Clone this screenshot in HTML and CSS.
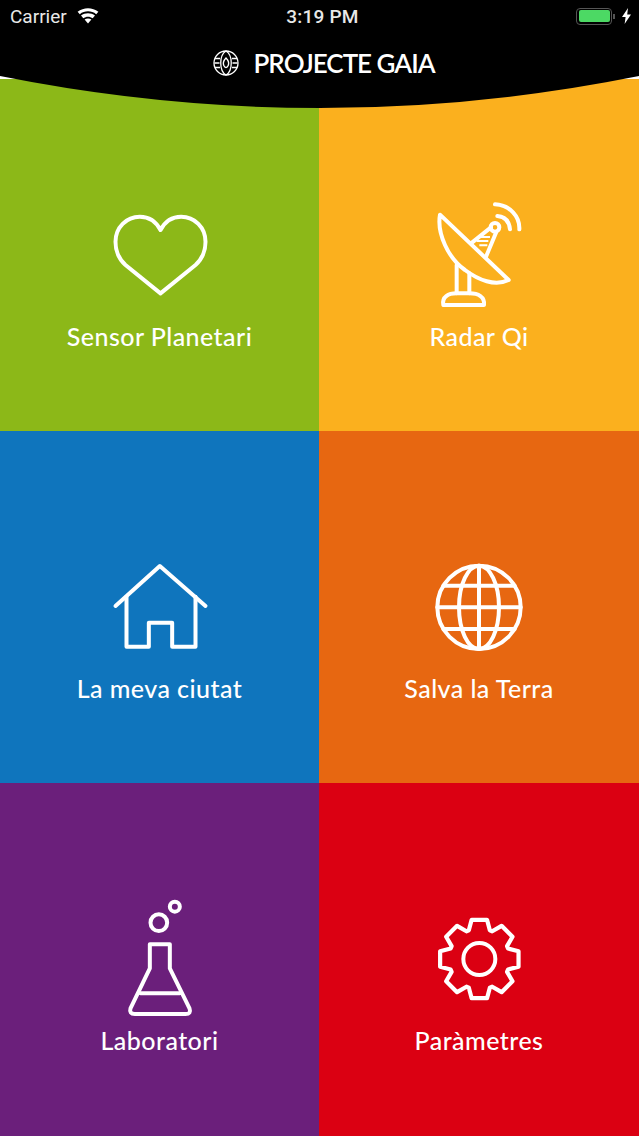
FILE: index.html
```html
<!DOCTYPE html>
<html lang="ca">
<head>
    <meta charset="UTF-8">
    <meta name="viewport" content="width=device-width, initial-scale=1.0">
    <title>Projecte Gaia</title>
    <link rel="stylesheet" href="styles.css">
</head>
<body>
    <header class="cap">
        <svg class="cap-fons" viewBox="0 0 639 110" width="639" height="110">
            <path d="M0 0H639V76Q320 140 0 76Z"/>
        </svg>
        <div class="estat">
            <div class="estat-esq">
                <span>Carrier</span>
                <svg class="wifi" viewBox="0 0 22 16" width="22" height="16">
                    <path d="M11 15.5L7.6 11.6C9.6 10 12.4 10 14.4 11.6Z"/>
                    <path d="M6.3 10.2L4 7.6C8 4.4 14 4.4 18 7.6L15.7 10.2C13 8.1 9 8.1 6.3 10.2Z"/>
                    <path d="M2.8 6.2L.6 3.8C6.6-1 15.4-1 21.4 3.8L19.2 6.2C14.4 2.4 7.6 2.4 2.8 6.2Z"/>
                </svg>
            </div>
            <span class="hora">3:19 PM</span>
            <div class="estat-dre">
                <div class="bateria"><div class="bateria-nivell"></div></div>
                <div class="bateria-punta"></div>
                <svg class="llamp" viewBox="0 0 9 16" width="9" height="16">
                    <path d="M6 0L0 9H3.6L2.6 16L9 6.4H5.2Z"/>
                </svg>
            </div>
        </div>
        <div class="titol">
            <svg class="logo" viewBox="0 0 26 26" width="26" height="26">
                <circle cx="13" cy="13" r="12"/>
                <path d="M13 1C6 5 6 21 13 25C20 21 20 5 13 1Z"/>
                <path d="M2 8.5H7M19 8.5H24M1.5 13H6.5M19.5 13H24.5M2 17.5H7M19 17.5H24"/>
                <path d="M13 8C10.5 10.5 10 13.5 10.8 15.5C11.4 17 12.3 17.5 13 17.5C13.7 17.5 14.6 17 15.2 15.5C16 13.5 15.5 10.5 13 8Z"/>
            </svg>
            <h1>PROJECTE GAIA</h1>
        </div>
    </header>

    <main class="graella">
        <a class="opcio verd">
            <svg class="icona" viewBox="58.5 15 300 360">
                <path d="M210 310L105 225C85 207 75 185 75 155C75 112 108 80 148 80C175 80 197 95 210 120C223 95 245 80 272 80C312 80 345 112 345 155C345 185 335 207 315 225Z"/>
            </svg>
            <span>Sensor Planetari</span>
        </a>
        <a class="opcio groc">
            <svg class="icona" viewBox="57 15 300 360">
                <path d="M90 74L296 270C255 290 205 270 165 240C115 205 80 130 90 74Z"/>
                <path d="M140 225V310M178 250V310"/>
                <path d="M100 345C95 320 115 310 140 310H178C205 310 225 320 222 345Z"/>
                <path d="M183 160L243 112M228 200L258 128"/>
                <circle cx="255" cy="112" r="13"/>
                <path class="fi" d="M205 141H240M200 153H235M208 166H232"/>
                <path d="M262 78C285 80 298 95 300 118M255 43C300 45 330 80 328 118"/>
            </svg>
            <span>Radar Qi</span>
        </a>
        <a class="opcio blau">
            <svg class="icona" viewBox="28.5 -24 300 360">
                <path d="M45 153L178 33L315 153"/>
                <path d="M78 125V275H145V203H215V275H285V125"/>
            </svg>
            <span>La meva ciutat</span>
        </a>
        <a class="opcio taronja">
            <svg class="icona" viewBox="12 -24 300 360">
                <circle cx="162" cy="157" r="125"/>
                <ellipse cx="162" cy="157" rx="60" ry="125"/>
                <path d="M162 32V282M37 157H287M55 92H269M55 222H269"/>
            </svg>
            <span>Salva la Terra</span>
        </a>
        <a class="opcio lila">
            <svg class="icona" viewBox="-16.5 27 300 360">
                <circle cx="130" cy="98" r="25"/>
                <circle cx="178" cy="50" r="15"/>
                <path d="M103 163H163V235L222 355Q228 372 210 372H58Q40 372 45 355L103 235Z"/>
                <path d="M75 310H193"/>
            </svg>
            <span>Laboratori</span>
        </a>
        <a class="opcio vermell">
            <svg class="icona" viewBox="12 -18 300 360">
                <g transform="translate(163 162) scale(1.05)">
                    <polygon points="-30,-82 -22,-112 22,-112 30,-82 36.8,-79.2 63.6,-94.8 94.8,-63.6 79.2,-36.8 82,-30 112,-22 112,22 82,30 79.2,36.8 94.8,63.6 63.6,94.8 36.8,79.2 30,82 22,112 -22,112 -30,82 -36.8,79.2 -63.6,94.8 -94.8,63.6 -79.2,36.8 -82,30 -112,22 -112,-22 -82,-30 -79.2,-36.8 -94.8,-63.6 -63.6,-94.8 -36.8,-79.2"/>
                </g>
                <circle cx="163" cy="162" r="48"/>
            </svg>
            <span>Paràmetres</span>
        </a>
    </main>
</body>
</html>
```

FILE: styles.css
```css
* {
    margin: 0;
    padding: 0;
    box-sizing: border-box;
}
body {
    background-color: #fff;
    color: #fff;
    font-family: 'Lato', sans-serif;
    height: 1136px;
    padding-top: 79px;
    overflow: hidden;
}
.cap {
    position: absolute;
    top: 0;
    left: 0;
    width: 639px;
    height: 110px;
}
.cap-fons {
    position: absolute;
    top: 0;
    left: 0;
    fill: #000;
}
.estat {
    position: relative;
    display: grid;
    grid-template-columns: 1fr auto 1fr;
    align-items: center;
    height: 33px;
    padding: 0 8px 1px 10px;
    font-family: 'Roboto', sans-serif;
    font-size: 19px;
    color: #e8e8e8;
}
.estat-esq {
    display: flex;
    align-items: center;
    gap: 10px;
}
.wifi {
    fill: #fff;
}
.hora {
    font-weight: 500;
    letter-spacing: 0.2px;
    margin-left: 4px;
}
.estat-dre {
    display: flex;
    align-items: center;
    justify-content: flex-end;
}
.bateria {
    width: 36px;
    height: 17px;
    border: 1.5px solid #555;
    border-radius: 4px;
    padding: 1.5px;
}
.bateria-nivell {
    height: 100%;
    background-color: #4cd964;
    border-radius: 2px;
}
.bateria-punta {
    width: 2px;
    height: 5px;
    background-color: #555;
    margin-left: 1px;
}
.llamp {
    fill: #fff;
    margin-left: 7px;
}
.titol {
    position: relative;
    display: flex;
    align-items: center;
    justify-content: center;
    gap: 15px;
    height: 28px;
    margin-top: 16px;
    padding-left: 8px;
}
.logo {
    fill: none;
    stroke: #fff;
    stroke-width: 1.3;
}
.titol h1 {
    font-size: 26px;
    font-weight: 600;
    letter-spacing: -1px;
}
.graella {
    display: grid;
    grid-template-columns: 319px 320px;
    grid-template-rows: 352px 352px 353px;
}
.opcio {
    display: flex;
    flex-direction: column;
    align-items: center;
    padding-top: 116px;
}
.opcio span {
    font-size: 25px;
    font-weight: 500;
    letter-spacing: 0.45px;
    line-height: 30px;
    margin-top: 6px;
}
.icona {
    width: 100px;
    height: 120px;
    fill: none;
    stroke: #fff;
    stroke-width: 12;
    stroke-linecap: round;
    stroke-linejoin: round;
}
.icona .fi {
    stroke-width: 6;
    stroke-linecap: butt;
}
.verd { background-color: #8cb818; }
.groc { background-color: #fbb01e; }
.blau { background-color: #0f75bd; }
.taronja { background-color: #e76711; }
.lila { background-color: #6b1f7b; }
.vermell { background-color: #db0012; }
```
